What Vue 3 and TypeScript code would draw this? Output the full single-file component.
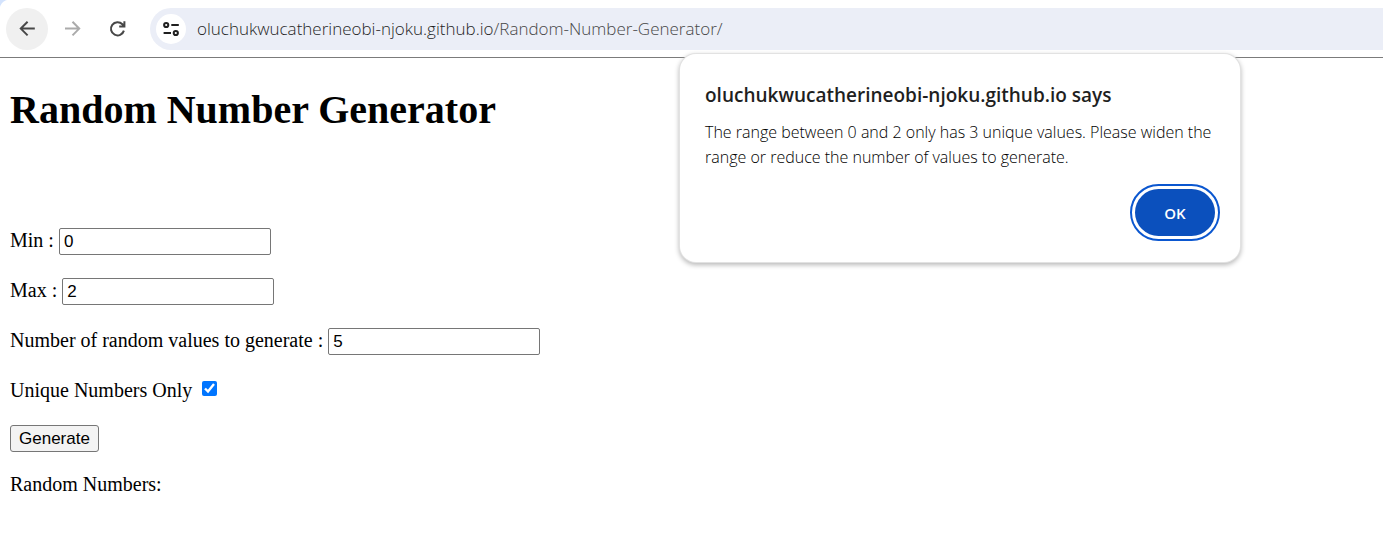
<script setup lang="ts">
import { ref } from 'vue'

const min = ref('0')
const max = ref('2')
const count = ref('5')
const uniqueOnly = ref(true)
</script>

<template>
  <div class="browser">
    <header class="toolbar">
      <nav class="nav">
        <button class="nav-btn active" type="button" aria-label="Back">
          <svg viewBox="0 0 20 20" width="20" height="20"><path d="M17.8 9.6H4M10.6 2.8L3.8 9.6L10.6 16.4" /></svg>
        </button>
        <button class="nav-btn faded" type="button" aria-label="Forward">
          <svg viewBox="0 0 20 20" width="20" height="20"><path d="M3 9.6H17M10.5 2.8L17.2 9.6L10.5 16.4" /></svg>
        </button>
        <button class="nav-btn" type="button" aria-label="Reload">
          <svg viewBox="0 0 20 20" width="20" height="20"><path d="M16.9 11.6A6.6 6.6 0 1 1 15.4 5.3L17 7M17.4 2.2V7.4H12.2" /></svg>
        </button>
      </nav>
      <div class="address">
        <button class="site-info" type="button" aria-label="View site information">
          <svg viewBox="0 0 20 20" width="20" height="20">
            <circle cx="5.2" cy="6" r="2.1" /><path d="M10.3 6H17.8M2.6 14H10" /><circle cx="14.8" cy="14" r="2.1" />
          </svg>
        </button>
        <a class="url" href="#">oluchukwucatherineobi-njoku.github.io<span>/Random-Number-Generator/</span></a>
      </div>
    </header>

    <main class="page">
      <h1>Random Number Generator</h1>
      <form class="form" @submit.prevent>
        <div class="row">
          <label for="min">Min :</label>
          <input id="min" v-model="min" class="field" type="text" />
        </div>
        <div class="row">
          <label for="max">Max :</label>
          <input id="max" v-model="max" class="field" type="text" />
        </div>
        <div class="row">
          <label for="count">Number of random values to generate :</label>
          <input id="count" v-model="count" class="field" type="text" />
        </div>
        <div class="row check-row">
          <label for="unique">Unique Numbers Only</label>
          <input id="unique" v-model="uniqueOnly" class="check" type="checkbox" />
        </div>
        <button class="generate" type="submit">Generate</button>
        <p class="result">Random Numbers:</p>
      </form>
    </main>

    <section class="dialog" role="alertdialog" aria-labelledby="dialog-title" aria-describedby="dialog-text">
      <h2 id="dialog-title">oluchukwucatherineobi-njoku.github.io says</h2>
      <p id="dialog-text">The range between 0 and 2 only has 3 unique values. Please widen the range or reduce the number of values to generate.</p>
      <button class="ok" type="button">OK</button>
    </section>
  </div>
</template>

<style>
body {
  background: #fff;
}
</style>

<style scoped>
.browser {
  position: relative;
  min-height: 100vh;
  overflow: hidden;
  background: #fff;
  color: #000;
}

.toolbar {
  display: flex;
  align-items: center;
  gap: 12px;
  padding: 8px 0 7px 6px;
  border-bottom: 1px solid #7b7b7b;
  background: radial-gradient(circle at 10px 10px, #fff 10px, #d3e3fd 11px) 0 0 / 10px 10px no-repeat;
}

.nav {
  display: flex;
  gap: 3px;
}

.nav-btn {
  display: grid;
  place-items: center;
  width: 42px;
  height: 42px;
  padding: 0;
  border: 0;
  border-radius: 50%;
  background: transparent;
}

.nav-btn.active {
  background: #f0f0f0;
}

svg {
  fill: none;
  stroke: #474747;
  stroke-width: 2;
}

.faded svg {
  stroke: #ababab;
}

.address {
  display: flex;
  flex: 1;
  align-items: center;
  gap: 11px;
  height: 42px;
  padding-left: 6px;
  border-radius: 21px 0 0 21px;
  background: #ebeef7;
}

.site-info {
  display: grid;
  place-items: center;
  width: 30px;
  height: 30px;
  padding: 0;
  border: 0;
  border-radius: 50%;
  background: #fff;
}

.site-info svg {
  stroke: #1f1f1f;
}

.url {
  color: #1f1f1f;
  font: 350 17px/24px "Open Sans", "Noto Sans", sans-serif;
  text-decoration: none;
  white-space: nowrap;
}

.url span {
  color: #474747;
}

.page {
  padding: 29px 10px;
  font: 20px/24px "Liberation Serif", "Times New Roman", serif;
}

h1 {
  margin: 0 0 95px;
  font-size: 40px;
  line-height: 46px;
}

.form {
  display: flex;
  flex-direction: column;
  align-items: flex-start;
  gap: 23px;
}

.row {
  display: flex;
  align-items: flex-start;
  gap: 5px;
}

.field {
  box-sizing: border-box;
  width: 212px;
  height: 27px;
  padding: 0 4px;
  border: 1px solid #767676;
  border-radius: 2px;
  background: #fff;
  color: #000;
  font: 17px "Liberation Sans", Arial, sans-serif;
}

.check-row {
  align-items: center;
  gap: 10px;
}

.check {
  width: 15px;
  height: 15px;
  margin: 0 0 3px;
  accent-color: #0075ff;
}

.generate {
  height: 27px;
  padding: 0 8px;
  border: 1px solid #767676;
  border-radius: 3px;
  background: #f3f3f3;
  color: #000;
  font: 17px "Liberation Sans", Arial, sans-serif;
}

.result {
  margin: 0;
  line-height: 18px;
}

.dialog {
  position: absolute;
  top: 54px;
  left: 680px;
  display: flex;
  flex-direction: column;
  box-sizing: border-box;
  width: 560px;
  padding: 28px 25px 26px;
  border-radius: 16px;
  background: #fff;
  box-shadow: 0 0 0 1px #e2e2e2, 0 2px 5px 1px #b8b8b8;
  color: #1f1f1f;
  font: 300 16px/25px "Open Sans", "Noto Sans", sans-serif;
}

h2 {
  margin: 0 0 12px;
  font-size: 19px;
  font-weight: 550;
  line-height: 26px;
}

#dialog-text {
  margin: 0;
  color: #000;
}

.ok {
  align-self: flex-end;
  width: 80px;
  height: 47px;
  margin-top: 19px;
  border: 0;
  border-radius: 24px;
  background: #0b50bd;
  outline: 2px solid #0b57d0;
  outline-offset: 3px;
  color: #fff;
  font: 600 15px "Open Sans", "Noto Sans", sans-serif;
}
</style>
